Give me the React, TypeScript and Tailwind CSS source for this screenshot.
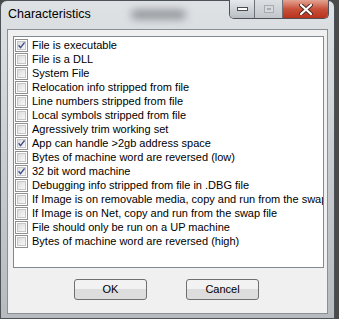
import React from 'react';

interface Flag {
  label: string;
  checked: boolean;
}

const flags: Flag[] = [
  { label: 'File is executable', checked: true },
  { label: 'File is a DLL', checked: false },
  { label: 'System File', checked: false },
  { label: 'Relocation info stripped from file', checked: false },
  { label: 'Line numbers stripped from file', checked: false },
  { label: 'Local symbols stripped from file', checked: false },
  { label: 'Agressively trim working set', checked: false },
  { label: 'App can handle >2gb address space', checked: true },
  { label: 'Bytes of machine word are reversed (low)', checked: false },
  { label: '32 bit word machine', checked: true },
  { label: 'Debugging info stripped from file in .DBG file', checked: false },
  { label: 'If Image is on removable media, copy and run from the swap file', checked: false },
  { label: 'If Image is on Net, copy and run from the swap file', checked: false },
  { label: 'File should only be run on a UP machine', checked: false },
  { label: 'Bytes of machine word are reversed (high)', checked: false },
];

// Classic Win7 checkbox with gradient fill
const CheckBox: React.FC<{ checked: boolean }> = ({ checked }) => (
  <div className="w-[13px] h-[13px] shrink-0 border border-[#8f8f8f] bg-white p-[1px]">
    <div className="w-full h-full border border-[#c6c6c6] bg-gradient-to-br from-[#dcdcdc] to-[#f8f8f8] flex items-center justify-center">
      {checked && (
        <svg width="9" height="9" viewBox="0 0 9 9">
          <path d="M0.8 4.2 L3.3 7.4 L8.4 0.6" fill="none" stroke="#3b4e8c" strokeWidth="1.7" />
        </svg>
      )}
    </div>
  </div>
);

const Button: React.FC<{ label: string }> = ({ label }) => (
  <button className="w-[73px] h-[21px] rounded-[3px] border border-[#707070] bg-gradient-to-b from-[#f2f2f2] from-50% to-[#dddddd] to-50% text-[11px] text-black leading-none">
    {label}
  </button>
);

const App: React.FC = () => {
  return (
    <div className="w-[339px] h-[319px] bg-[#4a4a4a] overflow-hidden font-['Liberation_Sans',Arial,sans-serif]">
      <div className="relative w-[335px] h-[319px] rounded-t-[7px] border border-[#4d5258] bg-gradient-to-b from-[#dfe2e5] via-[#c9cdd1] to-[#b7bbbf] flex flex-col">
        {/* blurred desktop behind glass */}
        <div className="absolute left-[130px] top-[9px] w-[55px] h-[9px] rounded-full bg-[#6c6f73] blur-[4px] opacity-70" />

        {/* Title bar */}
        <div className="h-[28px] flex items-center pl-[7px] pb-[1px] shrink-0">
          <span className="text-[12.5px] text-black">Characteristics</span>
        </div>

        {/* Caption buttons */}
        <div className="absolute top-[-1px] right-[5px] flex h-[19px] rounded-b-[5px] border border-t-0 border-[#4f5359] overflow-hidden">
          <div className="w-[25px] flex items-center justify-center border-r border-[#6e7278] bg-gradient-to-b from-[#e6e9ec] to-[#b9bec4]">
            <div className="w-[11px] h-[4px] bg-white border border-[#4a4e54]" />
          </div>
          <div className="w-[28px] flex items-center justify-center border-r border-[#6e7278] bg-gradient-to-b from-[#dde0e3] to-[#c2c6ca]">
            <div className="w-[10px] h-[8px] border border-[#a8acb1] bg-[#d6d9dc] flex items-center justify-center">
              <div className="w-[4px] h-[2px] border border-[#a8acb1]" />
            </div>
          </div>
          <div className="w-[45px] flex items-center justify-center bg-gradient-to-b from-[#e2a393] via-[#c8503a] to-[#b8321c]">
            <svg width="14" height="11" viewBox="0 0 14 11">
              <path d="M2 1 L12 10 M12 1 L2 10" stroke="#4a2a22" strokeWidth="4" strokeLinecap="round" />
              <path d="M2 1 L12 10 M12 1 L2 10" stroke="#ffffff" strokeWidth="2.2" strokeLinecap="round" />
            </svg>
          </div>
        </div>

        {/* Client area */}
        <div className="mx-[6px] h-[285px] border border-[#8a8f95] bg-[#f0f0f0] flex flex-col">
          <div className="mt-[6px] ml-[5px] w-[311px] h-[232px] border border-[#828790] bg-white pt-[1px] pl-[1px] overflow-hidden">
            {flags.map((flag) => (
              <div key={flag.label} className="h-[14px] flex items-center gap-[4px] whitespace-nowrap">
                <CheckBox checked={flag.checked} />
                <span className="text-[11px] leading-none text-black">{flag.label}</span>
              </div>
            ))}
          </div>
          <div className="mt-[11px] ml-[66px] flex gap-[39px]">
            <Button label="OK" />
            <Button label="Cancel" />
          </div>
        </div>
      </div>
    </div>
  );
};

export default App;
